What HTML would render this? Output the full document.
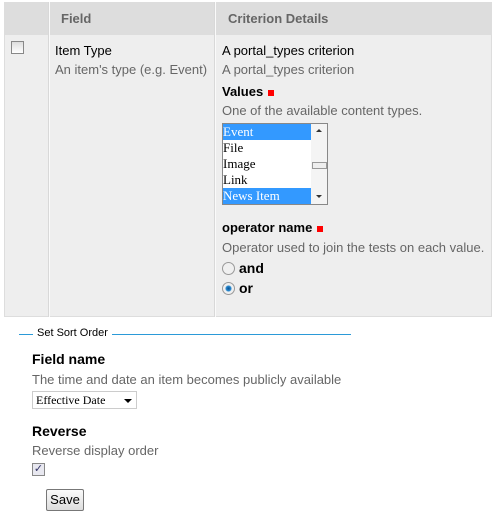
<!DOCTYPE html>
<html><head><style>
body{margin:0;width:498px;height:517px;background:#fff;font-family:"Liberation Sans",Arial,sans-serif;font-size:13px;position:relative;overflow:hidden}
.a{position:absolute;white-space:nowrap}
.d{color:#666}
.b{font-weight:bold;font-size:13px;color:#000}
.req{display:inline-block;width:6px;height:6px;background:#f00;margin-left:5px;vertical-align:0px}
</style></head><body>
<div class="a" style="left:4px;top:2px;width:488px;height:315px;background:#eee;border:1px solid #ddd;box-sizing:border-box"></div>
<div class="a" style="left:4px;top:2px;width:488px;height:33px;background:#ddd"></div>
<div class="a" style="left:48px;top:2px;width:1px;height:315px;background:#d8d8d8;border-right:1px solid #fafafa"></div>
<div class="a" style="left:214px;top:2px;width:1px;height:315px;background:#d8d8d8;border-right:1px solid #fafafa"></div>
<div class="a" style="left:61px;top:11px;font-weight:bold;font-size:13px;color:#666">Field</div>
<div class="a" style="left:228px;top:11px;font-weight:bold;font-size:13px;color:#666">Criterion Details</div>
<div class="a" style="left:11px;top:41px;width:11px;height:11px;border:1px solid #888;background:linear-gradient(#ddd,#fff)"></div>
<div class="a" style="left:55px;top:43px">Item Type</div>
<div class="a d" style="left:55px;top:62px">An item's type (e.g. Event)</div>
<div class="a" style="left:222px;top:43px">A portal_types criterion</div>
<div class="a d" style="left:222px;top:62px">A portal_types criterion</div>
<div class="a b" style="left:222px;top:84px">Values<span class="req"></span></div>
<div class="a d" style="left:222px;top:103px">One of the available content types.</div>
<div class="a" style="left:222px;top:123px;width:104px;height:80px;border:1px solid #888;background:#fff;font-family:'Liberation Serif',serif;font-size:13px;line-height:16px">
<div style="background:#3399ff;color:#fff;width:88px">Event</div><div>File</div><div>Image</div><div>Link</div><div style="background:#3399ff;color:#fff;width:88px">News Item</div>
<div class="a" style="left:88px;top:0;width:16px;height:80px;background:#f4f4f4"></div>
<div class="a" style="left:89px;top:38px;width:13px;height:5px;border:1px solid #999;background:#eee"></div>
<div class="a" style="left:93px;top:5px;border:3px solid transparent;border-bottom:3px solid #333;border-top:0"></div>
<div class="a" style="left:93px;top:71px;border:3px solid transparent;border-top:3px solid #333;border-bottom:0"></div>
</div>
<div class="a b" style="left:222px;top:220px">operator name<span class="req"></span></div>
<div class="a d" style="left:222px;top:240px">Operator used to join the tests on each value.</div>
<div class="a" style="left:222px;top:262px;width:11px;height:11px;border-radius:50%;border:1px solid #999;background:#f0f0f0"></div>
<div class="a b" style="left:239px;top:260px;font-size:14px">and</div>
<div class="a" style="left:222px;top:282px;width:11px;height:11px;border-radius:50%;border:1px solid #999;background:radial-gradient(circle,#0a4f8f 0,#2a8ad0 2.5px,#f0f0f0 3.5px)"></div>
<div class="a b" style="left:239px;top:280px;font-size:14px">or</div>
<div class="a" style="left:19px;top:334px;width:332px;height:1px;background:#2b9ad8"></div>
<div class="a" style="left:33px;top:327px;font-size:11px;background:#fff;padding:0 4px">Set Sort Order</div>
<div class="a b" style="left:32px;top:351px;font-size:14px">Field name</div>
<div class="a d" style="left:32px;top:372px">The time and date an item becomes publicly available</div>
<div class="a" style="left:32px;top:391px;width:100px;height:16px;border:1px solid #ccc;background:#fff;font-family:'Liberation Serif',serif;font-size:12px;line-height:16px;padding-left:3px;box-sizing:content-box">Effective Date<span class="a" style="left:91px;top:7px;border:4px solid transparent;border-top:4px solid #000;border-bottom:0"></span></div>
<div class="a b" style="left:32px;top:423px;font-size:14px">Reverse</div>
<div class="a d" style="left:32px;top:443px">Reverse display order</div>
<div class="a" style="left:32px;top:463px;width:11px;height:11px;border:1px solid #888;background:#e8e8f0;color:#336;font-size:11px;line-height:11px;text-align:center">✓</div>
<div class="a" style="left:46px;top:489px;width:36px;height:20px;border:1px solid #777;border-radius:2px;background:linear-gradient(#fafafa,#ddd);font-size:13px;line-height:20px;text-align:center">Save</div>
</body></html>
